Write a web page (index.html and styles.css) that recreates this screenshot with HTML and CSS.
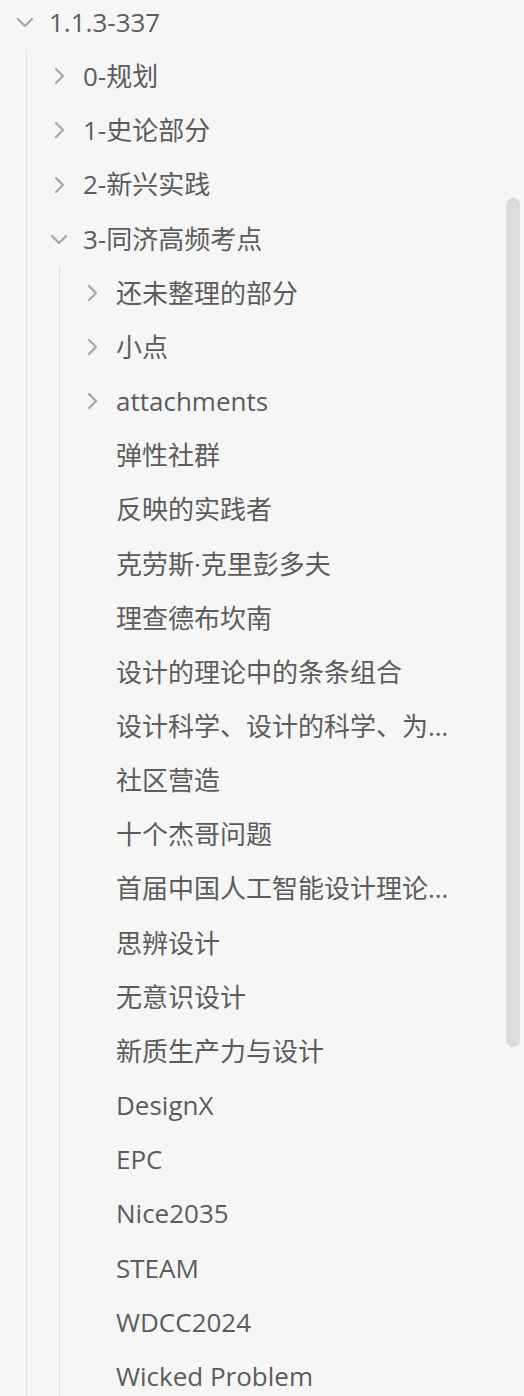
FILE: index.html
```html
<!DOCTYPE html>
<html lang="zh">
<head>
<meta charset="utf-8">
<title>File tree</title>
<link rel="stylesheet" href="styles.css">
</head>
<body>
<div class="pane">
  <div class="tree">
    <div class="row">
      <span class="chev"><svg viewBox="0 0 24 24"><path d="M5 9l7 7 7-7"/></svg></span>
      <span class="label">1.1.3-337</span>
    </div>
    <div class="children">
      <div class="row">
        <span class="chev"><svg viewBox="0 0 24 24"><path d="M9 5l7 7-7 7"/></svg></span>
        <span class="label">0-规划</span>
      </div>
      <div class="row">
        <span class="chev"><svg viewBox="0 0 24 24"><path d="M9 5l7 7-7 7"/></svg></span>
        <span class="label">1-史论部分</span>
      </div>
      <div class="row">
        <span class="chev"><svg viewBox="0 0 24 24"><path d="M9 5l7 7-7 7"/></svg></span>
        <span class="label">2-新兴实践</span>
      </div>
      <div class="row">
        <span class="chev"><svg viewBox="0 0 24 24"><path d="M5 9l7 7 7-7"/></svg></span>
        <span class="label">3-同济高频考点</span>
      </div>
      <div class="children">
        <div class="row">
          <span class="chev"><svg viewBox="0 0 24 24"><path d="M9 5l7 7-7 7"/></svg></span>
          <span class="label">还未整理的部分</span>
        </div>
        <div class="row">
          <span class="chev"><svg viewBox="0 0 24 24"><path d="M9 5l7 7-7 7"/></svg></span>
          <span class="label">小点</span>
        </div>
        <div class="row">
          <span class="chev"><svg viewBox="0 0 24 24"><path d="M9 5l7 7-7 7"/></svg></span>
          <span class="label">attachments</span>
        </div>
        <div class="row"><span class="chev"></span><span class="label">弹性社群</span></div>
        <div class="row"><span class="chev"></span><span class="label">反映的实践者</span></div>
        <div class="row"><span class="chev"></span><span class="label">克劳斯·克里彭多夫</span></div>
        <div class="row"><span class="chev"></span><span class="label">理查德布坎南</span></div>
        <div class="row"><span class="chev"></span><span class="label">设计的理论中的条条组合</span></div>
        <div class="row"><span class="chev"></span><span class="label">设计科学、设计的科学、为设计的科学</span></div>
        <div class="row"><span class="chev"></span><span class="label">社区营造</span></div>
        <div class="row"><span class="chev"></span><span class="label">十个杰哥问题</span></div>
        <div class="row"><span class="chev"></span><span class="label">首届中国人工智能设计理论研讨会</span></div>
        <div class="row"><span class="chev"></span><span class="label">思辨设计</span></div>
        <div class="row"><span class="chev"></span><span class="label">无意识设计</span></div>
        <div class="row"><span class="chev"></span><span class="label">新质生产力与设计</span></div>
        <div class="row"><span class="chev"></span><span class="label">DesignX</span></div>
        <div class="row"><span class="chev"></span><span class="label">EPC</span></div>
        <div class="row"><span class="chev"></span><span class="label">Nice2035</span></div>
        <div class="row"><span class="chev"></span><span class="label">STEAM</span></div>
        <div class="row"><span class="chev"></span><span class="label">WDCC2024</span></div>
        <div class="row"><span class="chev"></span><span class="label">Wicked Problem</span></div>
      </div>
    </div>
  </div>
  <div class="scrollbar"></div>
</div>
</body>
</html>
```
FILE: styles.css
```css
html, body {
  margin: 0;
  padding: 0;
  background: #f6f6f6;
}
body {
  font-family: "Open Sans", "Noto Sans CJK SC", sans-serif;
  font-size: 26px;
  color: #5c5c5c;
  overflow: hidden;
}
.pane {
  position: relative;
  width: 524px;
  height: 1396px;
  overflow: hidden;
}
.tree {
  width: 455px;
  margin-top: -5px;
}
.row {
  display: flex;
  align-items: center;
  height: 54.16px;
  padding-left: 13px;
  box-sizing: border-box;
}
.chev {
  flex: 0 0 24px;
  width: 24px;
  height: 24px;
  margin-right: 12px;
  display: flex;
  align-items: center;
  justify-content: center;
}
.chev svg {
  width: 24px;
  height: 24px;
  fill: none;
  stroke: #a9a9a9;
  stroke-width: 2.4;
  stroke-linecap: round;
  stroke-linejoin: round;
}
.label {
  flex: 1 1 auto;
  min-width: 0;
  white-space: nowrap;
  overflow: hidden;
  text-overflow: ellipsis;
  line-height: 1.7;
}
.children {
  margin-left: 26px;
  padding-left: 7px;
  border-left: 1px solid #e0e0e0;
}
.children .children {
  margin-left: 25px;
}
.scrollbar {
  position: absolute;
  left: 506px;
  top: 198px;
  width: 14px;
  height: 849px;
  border-radius: 7px;
  background: #dcdcdc;
}
```
